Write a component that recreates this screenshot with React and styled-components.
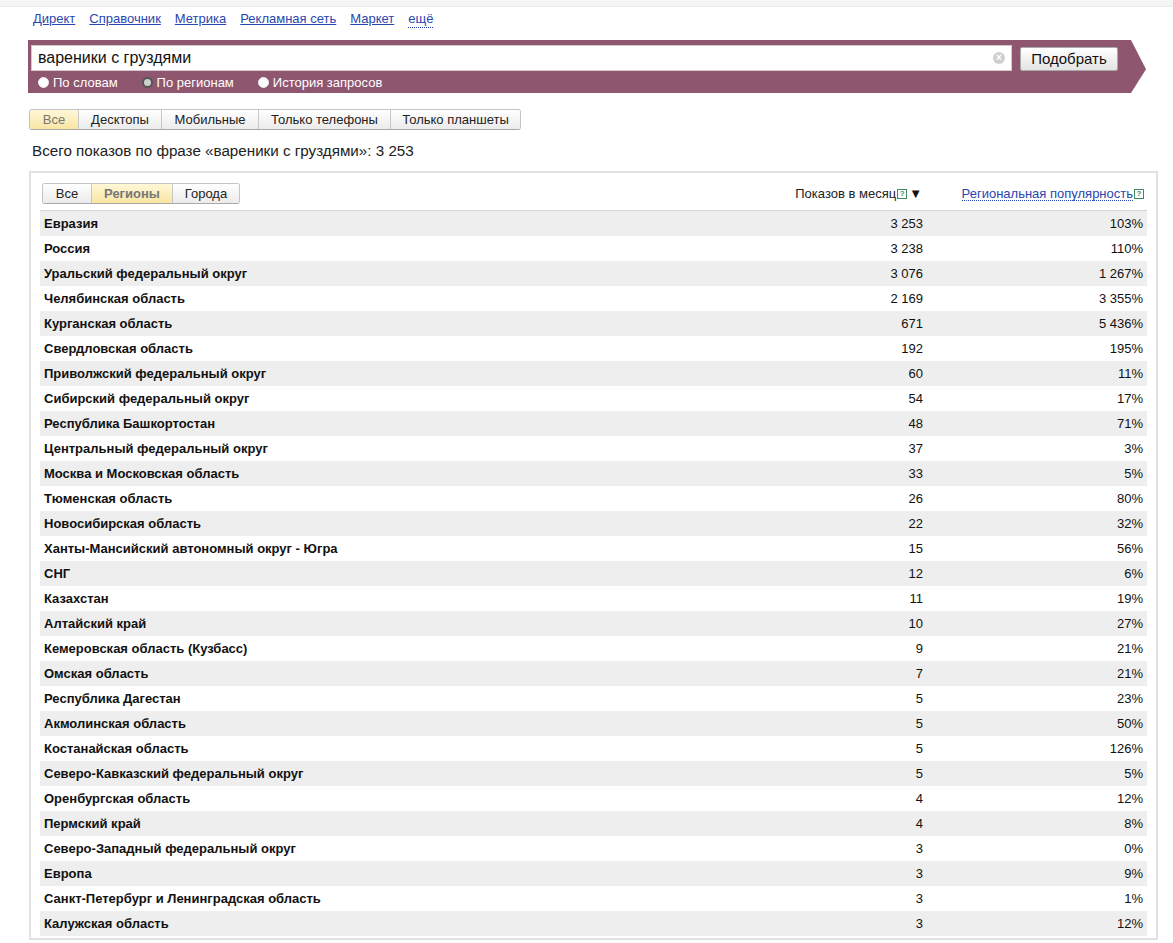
import React from 'react';
import styled, { createGlobalStyle } from 'styled-components';

const GlobalStyle = createGlobalStyle`
  body {
    margin: 0;
    background: #ffffff;
    font-family: "Liberation Sans", Arial, sans-serif;
    color: #111;
  }
`;

const TopStrip = styled.div`
  height: 6px;
  background: #f5f5f5;
  border-bottom: 1px solid #ececec;
`;

const Page = styled.div`
  padding-left: 28px;
  padding-bottom: 3px;
`;

const Nav = styled.nav`
  display: flex;
  gap: 14px;
  padding: 4px 0 0 5px;
  font-size: 13px;
  line-height: 16px;
`;

const NavLink = styled.a`
  color: #2a46b0;
  text-decoration: ${(p) => (p.$dotted ? 'none' : 'underline')};
  border-bottom: ${(p) => (p.$dotted ? '1px dotted #2a46b0' : 'none')};
  cursor: pointer;
`;

const Banner = styled.div`
  margin-top: 12px;
  width: 1118px;
  height: 53px;
  box-sizing: border-box;
  padding: 5px 0 0 3px;
  background: #8f5670;
  clip-path: polygon(0 0, 1103px 0, 100% 55%, 1103px 100%, 0 100%);
`;

const SearchRow = styled.div`
  display: flex;
  align-items: center;
  gap: 8px;
`;

const SearchField = styled.div`
  width: 981px;
  height: 26px;
  box-sizing: border-box;
  background: #fff;
  border: 1px solid #d6c6cd;
  display: flex;
  align-items: center;
  padding: 0 6px;
  font-size: 16px;
`;

const FieldText = styled.span`
  flex: 1;
`;

const ClearIcon = styled.span`
  width: 12px;
  height: 12px;
  border-radius: 50%;
  background: #cfcfcf;
  color: #fff;
  font-size: 10px;
  line-height: 12px;
  text-align: center;
  font-weight: bold;
`;

const Button = styled.button`
  width: 98px;
  height: 24px;
  margin-top: 1px;
  border: 1px solid #aaa;
  border-radius: 2px;
  background: linear-gradient(#ffffff, #e4e4e4);
  font-family: "Liberation Sans", Arial, sans-serif;
  font-size: 15px;
  color: #111;
  padding: 0;
`;

const RadioRow = styled.div`
  display: flex;
  align-items: center;
  height: 22px;
  padding-left: 7px;
  gap: 24px;
  font-size: 13px;
  color: #fff;
`;

const RadioItem = styled.label`
  display: flex;
  align-items: center;
  gap: 4px;
`;

const RadioDot = styled.span`
  width: 11px;
  height: 11px;
  box-sizing: border-box;
  border-radius: 50%;
  background: ${(p) => (p.$on ? '#cfcfcf' : '#fff')};
  border: ${(p) => (p.$on ? '2px solid #555' : '1px solid #eee')};
`;

const Tabs = styled.div`
  display: inline-flex;
  border: 1px solid #c4c4c4;
  border-bottom-color: #a9a9a9;
  border-radius: 3px;
  overflow: hidden;
  height: 21px;
  box-sizing: border-box;
  font-size: 13px;
`;

const Tab = styled.div`
  width: ${(p) => p.$w}px;
  box-sizing: border-box;
  display: flex;
  align-items: center;
  justify-content: center;
  border-left: 1px solid #c8c8c8;
  background: ${(p) =>
    p.$active ? 'linear-gradient(#fff7d8, #f9e6a3)' : 'linear-gradient(#ffffff, #ebebeb)'};
  color: ${(p) => (p.$active ? '#777' : '#222')};
  font-weight: ${(p) => (p.$bold ? 'bold' : 'normal')};
  &:first-child {
    border-left: none;
  }
`;

const DeviceTabs = styled(Tabs)`
  margin-top: 16px;
  margin-left: 1px;
`;

const SubTabs = styled(Tabs)`
  margin-left: 2px;
`;

const Summary = styled.div`
  margin-top: 12px;
  margin-left: 4px;
  font-size: 15.2px;
  line-height: 18px;
  color: #222;
`;

const Panel = styled.div`
  margin-top: 11px;
  margin-left: 1px;
  width: 1129px;
  box-sizing: border-box;
  border: 2px solid #e2e2e2;
  padding: 10px 9px 2px 9px;
`;

const Grid = styled.div`
  display: grid;
  grid-template-columns: 1fr 140px 224px;
`;

const HeaderRow = styled(Grid)`
  height: 27px;
  border-bottom: 1px solid #d4d4d4;
  font-size: 13px;
`;

const HeadCell = styled.div`
  display: flex;
  justify-content: flex-end;
  align-items: center;
  height: 21px;
  padding-right: ${(p) => p.$pr || 0}px;
  white-space: nowrap;
  color: #222;
`;

const HeadLink = styled.span`
  color: #2a46b0;
  border-bottom: 1px dotted #2a46b0;
  line-height: 13px;
`;

const Help = styled.span`
  display: inline-block;
  width: 10px;
  height: 10px;
  box-sizing: border-box;
  border: 1px solid #3f8a5e;
  font-size: 8px;
  font-weight: bold;
  line-height: 8px;
  text-align: center;
  color: #3f8a5e;
  margin-left: 1px;
`;

const Arrow = styled.span`
  font-size: 13px;
  margin-left: 2px;
  color: #111;
`;

const Row = styled(Grid)`
  height: 25px;
  align-items: center;
  font-size: 13px;
  background: ${(p) => (p.$odd ? '#eeeeee' : '#ffffff')};
`;

const Name = styled.div`
  padding-left: 4px;
  font-weight: bold;
`;

const Num = styled.div`
  text-align: right;
`;

const Pct = styled.div`
  text-align: right;
  padding-right: 4px;
`;

const rows = [
  ['Евразия', '3 253', '103%'],
  ['Россия', '3 238', '110%'],
  ['Уральский федеральный округ', '3 076', '1 267%'],
  ['Челябинская область', '2 169', '3 355%'],
  ['Курганская область', '671', '5 436%'],
  ['Свердловская область', '192', '195%'],
  ['Приволжский федеральный округ', '60', '11%'],
  ['Сибирский федеральный округ', '54', '17%'],
  ['Республика Башкортостан', '48', '71%'],
  ['Центральный федеральный округ', '37', '3%'],
  ['Москва и Московская область', '33', '5%'],
  ['Тюменская область', '26', '80%'],
  ['Новосибирская область', '22', '32%'],
  ['Ханты-Мансийский автономный округ - Югра', '15', '56%'],
  ['СНГ', '12', '6%'],
  ['Казахстан', '11', '19%'],
  ['Алтайский край', '10', '27%'],
  ['Кемеровская область (Кузбасс)', '9', '21%'],
  ['Омская область', '7', '21%'],
  ['Республика Дагестан', '5', '23%'],
  ['Акмолинская область', '5', '50%'],
  ['Костанайская область', '5', '126%'],
  ['Северо-Кавказский федеральный округ', '5', '5%'],
  ['Оренбургская область', '4', '12%'],
  ['Пермский край', '4', '8%'],
  ['Северо-Западный федеральный округ', '3', '0%'],
  ['Европа', '3', '9%'],
  ['Санкт-Петербург и Ленинградская область', '3', '1%'],
  ['Калужская область', '3', '12%'],
];

export default function App() {
  return (
    <>
      <GlobalStyle />
      <TopStrip />
      <Page>
        <Nav>
          <NavLink>Директ</NavLink>
          <NavLink>Справочник</NavLink>
          <NavLink>Метрика</NavLink>
          <NavLink>Рекламная сеть</NavLink>
          <NavLink>Маркет</NavLink>
          <NavLink $dotted>ещё</NavLink>
        </Nav>

        <Banner>
          <SearchRow>
            <SearchField>
              <FieldText>вареники с груздями</FieldText>
              <ClearIcon>×</ClearIcon>
            </SearchField>
            <Button>Подобрать</Button>
          </SearchRow>
          <RadioRow>
            <RadioItem><RadioDot />По словам</RadioItem>
            <RadioItem><RadioDot $on />По регионам</RadioItem>
            <RadioItem><RadioDot />История запросов</RadioItem>
          </RadioRow>
        </Banner>

        <DeviceTabs>
          <Tab $w={48} $active>Все</Tab>
          <Tab $w={83}>Десктопы</Tab>
          <Tab $w={97}>Мобильные</Tab>
          <Tab $w={132}>Только телефоны</Tab>
          <Tab $w={130}>Только планшеты</Tab>
        </DeviceTabs>

        <Summary>Всего показов по фразе «вареники с груздями»: 3 253</Summary>

        <Panel>
          <HeaderRow>
            <div>
              <SubTabs>
                <Tab $w={48}>Все</Tab>
                <Tab $w={81} $active $bold>Регионы</Tab>
                <Tab $w={67}>Города</Tab>
              </SubTabs>
            </div>
            <HeadCell $pr={1}>
              Показов в месяц<Help>?</Help><Arrow>▼</Arrow>
            </HeadCell>
            <HeadCell $pr={3}>
              <HeadLink>Региональная популярность</HeadLink><Help>?</Help>
            </HeadCell>
          </HeaderRow>
          {rows.map((r, i) => (
            <Row key={r[0]} $odd={i % 2 === 0}>
              <Name>{r[0]}</Name>
              <Num>{r[1]}</Num>
              <Pct>{r[2]}</Pct>
            </Row>
          ))}
        </Panel>
      </Page>
    </>
  );
}
